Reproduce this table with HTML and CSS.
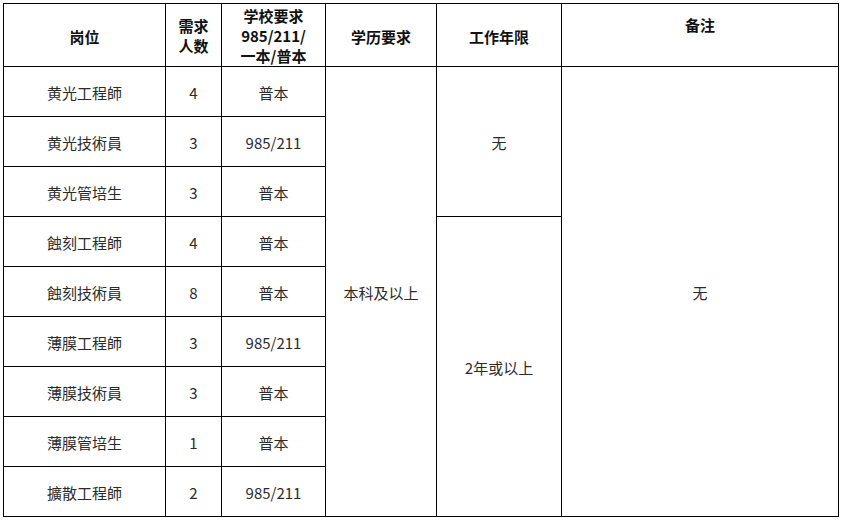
FILE: index.html
```html
<!DOCTYPE html>
<html lang="zh">
<head>
<meta charset="utf-8">
<title>岗位需求</title>
<link rel="stylesheet" href="styles.css">
</head>
<body>
<table class="jobs">
  <colgroup>
    <col class="c1"><col class="c2"><col class="c3"><col class="c4"><col class="c5"><col class="c6">
  </colgroup>
  <thead>
    <tr class="head">
      <th class="mid">岗位</th>
      <th class="tight">需求<br>人数</th>
      <th class="tight3">学校要求<br>985/211/<br>一本/普本</th>
      <th class="mid">学历要求</th>
      <th class="mid">工作年限</th>
      <th class="top">备注</th>
    </tr>
  </thead>
  <tbody>
    <tr><td>黄光工程師</td><td>4</td><td>普本</td><td rowspan="9">本科及以上</td><td rowspan="3">无</td><td rowspan="9">无</td></tr>
    <tr><td>黄光技術員</td><td>3</td><td>985/211</td></tr>
    <tr><td>黄光管培生</td><td>3</td><td>普本</td></tr>
    <tr><td>蝕刻工程師</td><td>4</td><td>普本</td><td rowspan="6">2年或以上</td></tr>
    <tr><td>蝕刻技術員</td><td>8</td><td>普本</td></tr>
    <tr><td>薄膜工程師</td><td>3</td><td>985/211</td></tr>
    <tr><td>薄膜技術員</td><td>3</td><td>普本</td></tr>
    <tr><td>薄膜管培生</td><td>1</td><td>普本</td></tr>
    <tr><td>擴散工程師</td><td>2</td><td>985/211</td></tr>
  </tbody>
</table>
</body>
</html>
```

FILE: styles.css
```css
html, body {
  margin: 0;
  padding: 0;
  background: #ffffff;
}
body {
  font-family: "Noto Sans CJK SC", "Noto Sans", sans-serif;
  font-size: 15px;
  color: #2b2b2b;
}
.jobs {
  margin: 3px 0 0 3px;
  border-collapse: collapse;
  table-layout: fixed;
  width: 835px;
}
.c1 { width: 162px; }
.c2 { width: 56px; }
.c3 { width: 104px; }
.c4 { width: 111px; }
.c5 { width: 125px; }
.c6 { width: 277px; }
.jobs th, .jobs td {
  border: 1px solid #000;
  text-align: center;
  vertical-align: middle;
  padding: 0;
  line-height: 20px;
}
.jobs th {
  font-weight: bold;
  color: #111;
}
.head { height: 63px; }
.head .mid { padding-top: 4px; }
.head .tight { padding-top: 2px; }
.head .tight3 { line-height: 20px; padding-top: 1px; }
.head .top { vertical-align: top; padding-top: 11px; }
.jobs tbody tr { height: 50px; }
.jobs tbody td { padding-top: 2px; }
```
